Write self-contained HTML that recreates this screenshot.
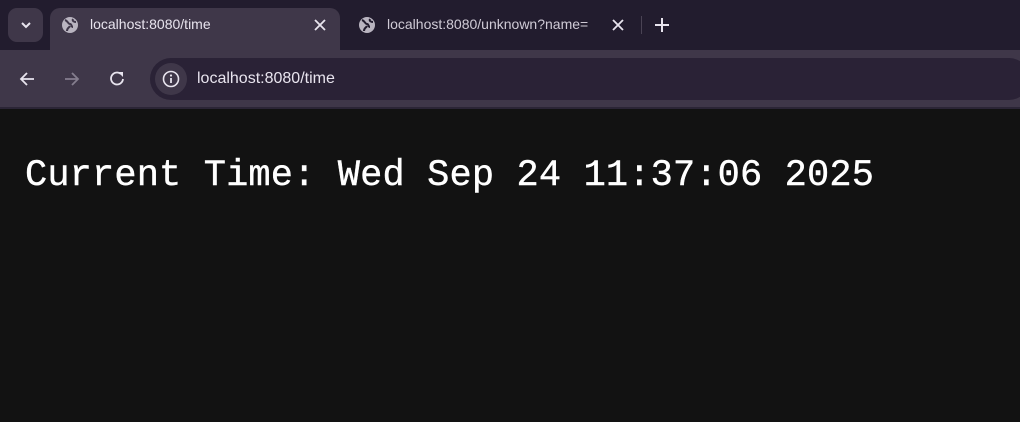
<!DOCTYPE html>
<html><head><style>
*{margin:0;padding:0;box-sizing:border-box}
body{width:1020px;height:422px;background:#121212;overflow:hidden;font-family:"Liberation Sans",sans-serif;position:relative}
.tabbar{position:absolute;left:0;top:0;width:1020px;height:50px;background:#221c2e}
.tool{position:absolute;left:0;top:50px;width:1020px;height:57px;background:#3f3749}
.line{position:absolute;left:0;top:107px;width:1020px;height:2px;background:#2b2536}
.drop{position:absolute;left:8px;top:8px;width:35px;height:34px;border-radius:9px;background:#3f3749}
.tab{position:absolute;left:50px;top:8px;width:290px;height:44px;background:#3f3749;border-radius:10px 10px 0 0}
.t{position:absolute;color:#e8e4ee;font-size:14px}
.omni{position:absolute;left:150px;top:58px;width:880px;height:42px;border-radius:21px;background:#2a2236}
.info{position:absolute;left:155px;top:63px;width:32px;height:32px;border-radius:16px;background:#3f3749}
.main{position:absolute;left:25px;top:153px;color:#fff;font-family:"Liberation Mono","DejaVu Sans Mono",monospace;font-size:37px;letter-spacing:0.14px;line-height:46px;white-space:pre;-webkit-text-stroke:0.4px #fff}
svg{position:absolute}
</style></head><body>
<div class="tabbar"></div>
<div class="drop"></div>
<svg style="left:20px;top:19px" width="12" height="12" viewBox="0 0 12 12"><path d="M2 4l4 4 4-4" stroke="#e8e4ee" stroke-width="2" fill="none"/></svg>
<div class="tab"></div>
<svg style="left:61px;top:16px" width="18" height="18" viewBox="0 0 18 18"><circle cx="9" cy="9" r="8" fill="#b9b4c0"/><path d="M4 4c3 1 3 4 5 4s1 3 3 3M12 3c-1 2 1 3 3 3M6 15c0-3 2-3 3-5" stroke="#3f3749" stroke-width="2" fill="none"/></svg>
<div class="t" style="left:90px;top:16px">localhost:8080/time</div>
<svg style="left:314px;top:19px" width="12" height="12" viewBox="0 0 12 12"><path d="M1 1l10 10M11 1L1 11" stroke="#e8e4ee" stroke-width="1.8"/></svg>
<svg style="left:358px;top:16px" width="18" height="18" viewBox="0 0 18 18"><circle cx="9" cy="9" r="8" fill="#b9b4c0"/><path d="M4 4c3 1 3 4 5 4s1 3 3 3M12 3c-1 2 1 3 3 3M6 15c0-3 2-3 3-5" stroke="#221c2e" stroke-width="2" fill="none"/></svg>
<div class="t" style="left:387px;top:16px;width:210px;overflow:hidden;white-space:nowrap;color:#d0cbd6;font-size:14px">localhost:8080/unknown?name=</div>
<svg style="left:612px;top:19px" width="12" height="12" viewBox="0 0 12 12"><path d="M1 1l10 10M11 1L1 11" stroke="#e8e4ee" stroke-width="1.8"/></svg>
<div style="position:absolute;left:641px;top:16px;width:1px;height:18px;background:#4a4354"></div>
<svg style="left:655px;top:18px" width="14" height="14" viewBox="0 0 14 14"><path d="M7 0v14M0 7h14" stroke="#e8e4ee" stroke-width="2"/></svg>
<div class="tool"></div>
<div class="line"></div>
<svg style="left:19px;top:71px" width="16" height="16" viewBox="0 0 16 16"><path d="M15 8H2M8 2L2 8l6 6" stroke="#e8e4ee" stroke-width="1.8" fill="none"/></svg>
<svg style="left:64px;top:71px" width="16" height="16" viewBox="0 0 16 16"><path d="M1 8h13M8 2l6 6-6 6" stroke="#857e8e" stroke-width="1.8" fill="none"/></svg>
<svg style="left:109px;top:70px" width="17" height="17" viewBox="0 0 17 17"><path d="M14 9a6 6 0 1 1-2-5" stroke="#e8e4ee" stroke-width="1.8" fill="none"/><path d="M9 2h5v5z" fill="#e8e4ee"/></svg>
<div class="omni"></div>
<div class="info"></div>
<svg style="left:162px;top:70px" width="18" height="18" viewBox="0 0 18 18"><circle cx="9" cy="9" r="7.5" stroke="#e8e4ee" stroke-width="1.6" fill="none"/><path d="M9 8v5" stroke="#e8e4ee" stroke-width="1.8"/><circle cx="9" cy="5.5" r="1.1" fill="#e8e4ee"/></svg>
<div class="t" style="left:197px;top:70px;font-size:16px">localhost:8080/time</div>
<div class="main">Current Time: Wed Sep 24 11:37:06 2025</div>
</body></html>
